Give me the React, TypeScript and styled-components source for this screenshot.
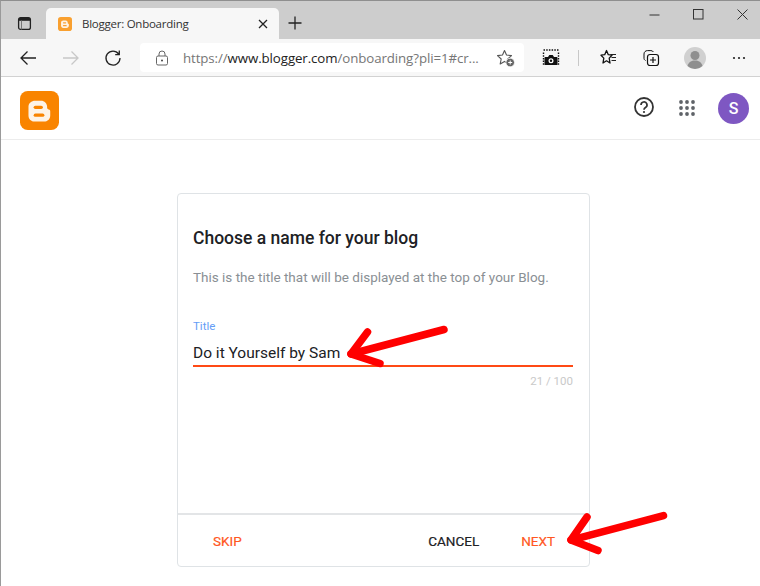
import React from "react";
import styled, { createGlobalStyle } from "styled-components";

const Global = createGlobalStyle`
  html, body { margin: 0; padding: 0; background: #fff; }
  body { font-family: Roboto, "Liberation Sans", sans-serif; width: 760px; height: 586px; overflow: hidden; }
  * { box-sizing: border-box; }
`;

const Window = styled.div`
  position: relative;
  width: 760px;
  height: 586px;
  display: flex;
  flex-direction: column;
  border-top: 1px solid #8f8f8f;
  border-left: 1px solid #9a9a9a;
  overflow: hidden;
`;

const TabStrip = styled.div`
  height: 38px;
  flex: none;
  background: #cdcdcd;
  display: flex;
  align-items: flex-end;
  padding-left: 15px;
`;

const StripIcon = styled.span`
  width: 16px;
  height: 16px;
  display: flex;
  margin-bottom: 8px;
  margin-right: 14px;
`;

const Tab = styled.div`
  width: 233px;
  height: 31px;
  background: #f7f7f7;
  border-radius: 5px 5px 0 0;
  display: flex;
  align-items: center;
  padding: 0 11px 0 12px;
  font-family: "Open Sans", "Liberation Sans", sans-serif;
  font-size: 11.5px;
  color: #333;
`;

const TabTitle = styled.span`
  flex: 1;
  margin-left: 10px;
  letter-spacing: -0.25px;
`;

const NewTab = styled.span`
  width: 14px;
  height: 14px;
  display: flex;
  margin: 0 0 9px 9px;
`;

const WindowControls = styled.div`
  margin-left: auto;
  display: flex;
  align-self: flex-start;
  gap: 33px;
  padding: 8px 12px 0 0;
`;

const Toolbar = styled.div`
  height: 38px;
  flex: none;
  background: #f7f7f7;
  border-bottom: 1px solid #d2d2d2;
  display: flex;
  align-items: center;
  padding-left: 18px;
`;

const NavIcon = styled.span<{ $gap?: number; $left?: number }>`
  display: flex;
  width: 18px;
  height: 18px;
  margin-left: ${(p) => p.$left ?? 0}px;
  margin-right: ${(p) => p.$gap ?? 0}px;
`;

const ProfileIcon = styled.svg`
  margin-right: 26px;
`;

const AddressBar = styled.div`
  width: 384px;
  height: 29px;
  background: #fff;
  border-radius: 4px;
  display: flex;
  align-items: center;
  padding: 0 9px 0 15px;
  font-family: "Open Sans", "Liberation Sans", sans-serif;
  font-size: 13.3px;
  color: #767676;
  letter-spacing: -0.1px;
  white-space: nowrap;
`;

const Url = styled.span`
  flex: 1;
  margin-left: 14px;
`;

const Host = styled.span`
  color: #222;
`;

const Separator = styled.span`
  width: 1px;
  height: 16px;
  background: #c8c8c8;
  margin: 0 20px 0 18px;
`;

const Header = styled.header`
  height: 63px;
  flex: none;
  border-bottom: 1px solid #ececec;
  background: #fff;
  display: flex;
  align-items: center;
  padding: 0 11px 0 19px;
`;

const LogoSlot = styled.span`
  display: flex;
  margin-top: 4px;
`;

const HeaderActions = styled.div`
  margin-left: auto;
  display: flex;
  align-items: center;
`;

const HelpIcon = styled.svg`
  margin: -2px 25px 0 0;
`;

const Avatar = styled.div`
  width: 31px;
  height: 31px;
  border-radius: 50%;
  background: #7e57c2;
  color: #fff;
  font-size: 16px;
  font-weight: 500;
  display: flex;
  align-items: center;
  justify-content: center;
  margin-left: 23px;
`;

const Body = styled.main`
  flex: 1;
  display: flex;
  padding: 53px 0 0 176px;
`;

const Card = styled.section`
  width: 413px;
  height: 374px;
  border: 1px solid #dfe3e6;
  border-radius: 4px;
  display: flex;
  flex-direction: column;
  background: #fff;
`;

const CardBody = styled.div`
  flex: 1;
  padding: 34px 16px 0 15px;
`;

const CardTitle = styled.h1`
  margin: 0;
  font-size: 17.5px;
  line-height: 20px;
  font-weight: 500;
  color: #202124;
`;

const CardHint = styled.p`
  margin: 19px 0 0;
  font-size: 13.5px;
  line-height: 20px;
  color: #8a8f94;
`;

const FieldLabel = styled.div`
  margin-top: 32px;
  font-size: 11.5px;
  line-height: 14px;
  color: #669df6;
`;

const FieldValue = styled.div`
  margin-top: 10px;
  font-size: 15.5px;
  line-height: 20px;
  color: #202124;
  padding-bottom: 2px;
  border-bottom: 2px solid #ff4a15;
`;

const Counter = styled.div`
  margin-top: 7px;
  font-size: 11.5px;
  line-height: 14px;
  text-align: right;
  color: #c9c9c9;
`;

const Footer = styled.footer`
  height: 53px;
  flex: none;
  border-top: 2px solid #e3e5e7;
  display: flex;
  align-items: center;
  padding: 0 34px 0 35px;
`;

const Action = styled.span<{ $dark?: boolean; $left?: number }>`
  font-size: 13.5px;
  font-weight: 400;
  -webkit-text-stroke: 0.2px currentColor;
  color: ${(p) => (p.$dark ? "#202124" : "#ff5722")};
  margin-left: ${(p) => p.$left ?? 0}px;
`;

const Spacer = styled.span`
  flex: 1;
`;

const ArrowLayer = styled.svg`
  position: absolute;
  left: -1px;
  top: -1px;
  width: 760px;
  height: 586px;
  pointer-events: none;
`;

const Stroke = { fill: "none", stroke: "#222", strokeWidth: 1.3 } as const;

const BloggerLogo = ({ size, fill = "#f98400" }: { size: number; fill?: string }) => (
  <svg width={size} height={size} viewBox="0 0 40 40">
    <rect width="40" height="40" rx="8" fill={fill} />
    <path d="M15.500 10h6c3.800 0 6 2.600 6.300 5.700v1.300c0 1.200 .6 1.800 1.700 2 .9 .2 1.500 .8 1.500 1.800V25c0 3.600-2.800 6.300-6.400 6.300H15c-3.500 0-6.300-2.700-6.300-6.300V16c0-3.400 3-6 6.800-6z" fill="#fdf3e7" />
    <rect x="14" y="15" width="9.500" height="3.500" rx="1.750" fill={fill} />
    <rect x="14" y="23" width="11" height="3.500" rx="1.750" fill={fill} />
  </svg>
);

const Arrow = ({ tail, tip, upper, lower }: Record<"tail" | "tip" | "upper" | "lower", string>) => (
  <g fill="none" stroke="#ff0000" strokeWidth="7.500" strokeLinecap="round" strokeLinejoin="round">
    <path d={`M${tail}L${tip}`} />
    <path d={`M${upper}L${tip}L${lower}`} />
  </g>
);

export default function App() {
  return (
    <>
      <Global />
      <Window>
        <TabStrip>
          <StripIcon>
            <svg width="16" height="16" viewBox="0 0 16 16">
              <rect x="2.600" y="2.600" width="11.800" height="11.800" rx="2" {...Stroke} />
              <rect x="3" y="3" width="11" height="2.800" fill="#222" />
              <path d="M5.500 5.500v9" stroke="#777" strokeWidth="1" />
            </svg>
          </StripIcon>
          <Tab>
            <BloggerLogo size={14} fill="#f9a030" />
            <TabTitle>Blogger: Onboarding</TabTitle>
            <svg width="10" height="10" viewBox="0 0 10 10">
              <path d="M1 1l8 8M9 1l-8 8" {...Stroke} />
            </svg>
          </Tab>
          <NewTab>
            <svg width="14" height="14" viewBox="0 0 14 14">
              <path d="M7 0.500v13M0.500 7h13" {...Stroke} />
            </svg>
          </NewTab>
          <WindowControls>
            <svg width="11" height="11" viewBox="0 0 11 11"><path d="M0.500 6h10" {...Stroke} strokeWidth={1} stroke="#333" /></svg>
            <svg width="11" height="11" viewBox="0 0 11 11"><rect x="0.500" y="0.500" width="9.500" height="9.500" {...Stroke} strokeWidth={1} stroke="#333" /></svg>
            <svg width="11" height="11" viewBox="0 0 11 11"><path d="M0.500 0.500l10 10M10.500 0.500l-10 10" {...Stroke} strokeWidth={1} stroke="#333" /></svg>
          </WindowControls>
        </TabStrip>
        <Toolbar>
          <NavIcon $gap={25}>
            <svg width="18" height="18" viewBox="0 0 18 18"><path d="M17 9H2M8.500 2.500L2 9l6.500 6.500" {...Stroke} /></svg>
          </NavIcon>
          <NavIcon $gap={24}>
            <svg width="18" height="18" viewBox="0 0 18 18"><path d="M1 9h15M9.500 2.500L16 9l-6.500 6.500" {...Stroke} stroke="#c8c8c8" /></svg>
          </NavIcon>
          <NavIcon $gap={18}>
            <svg width="18" height="18" viewBox="0 0 18 18"><path d="M14.700 5A7 7 0 1 0 16 9M15.300 1.500V5.600h-4.100" {...Stroke} /></svg>
          </NavIcon>
          <AddressBar>
            <svg width="14" height="16" viewBox="0 0 14 16">
              <path d="M4 6V4a3 3 0 0 1 6 0v2" fill="none" stroke="#666" />
              <rect x="1.500" y="6" width="11" height="9" rx="1.500" fill="none" stroke="#666" />
              <circle cx="7" cy="10.500" r="1" fill="#444" />
            </svg>
            <Url>https://<Host>www.blogger.com</Host>/onboarding?pli=1#cr...</Url>
            <svg width="18" height="18" viewBox="0 0 18 18">
              <path d="M7.500 1.500l2 4.500 5 .6-3.700 3.400 1 4.900-4.300-2.500-4.300 2.500 1-4.900L0.500 6.600l5-.6z" fill="none" stroke="#555" strokeWidth="1.100" strokeLinejoin="round" />
              <circle cx="13.200" cy="13.500" r="4.300" fill="#666" stroke="#fff" strokeWidth="0.800" />
              <path d="M13.200 11.500v4M11.200 13.500h4" stroke="#fff" />
            </svg>
          </AddressBar>
          <NavIcon $left={18}>
            <svg width="18" height="18" viewBox="0 0 18 18">
              <path d="M1.500 1h15M1.500 3.500v13M16.500 3.500v13" fill="none" stroke="#111" strokeWidth="1.400" strokeDasharray="1.500 1.200" />
              <path d="M3.500 8h2.500l1.300-2h3.400l1.300 2h2.500c.6 0 1 .4 1 1v7h-13V9c0-.6 .4-1 1-1z" fill="#111" />
              <circle cx="9" cy="11.800" r="2.500" fill="#fff" />
              <circle cx="9" cy="11.800" r="1.200" fill="#111" />
            </svg>
          </NavIcon>
          <Separator />
          <NavIcon $gap={25}>
            <svg width="18" height="18" viewBox="0 0 18 18">
              <path d="M7.500 1.500l1.800 4.200 3.700 .5-2.800 2.900 .8 4.900-3.500-2.200-3.500 2.200 .8-4.900L2 6.200l3.700-.5z" fill="none" stroke="#111" strokeWidth="1.300" strokeLinejoin="round" />
              <path d="M11.500 5.500h5.500M12.500 8.500h4.500M12.500 11.500h4.500" stroke="#222" />
            </svg>
          </NavIcon>
          <NavIcon $gap={24}>
            <svg width="18" height="18" viewBox="0 0 18 18">
              <path d="M3.500 11.500c-.8-.4-1.500-1.100-1.500-2.200V5c0-1.900 1.500-3.400 3.400-3.400h3.500c1.100 0 2 .5 2.500 1.400" fill="none" stroke="#111" />
              <rect x="5.500" y="5.500" width="11" height="11" rx="2.500" fill="none" stroke="#111" strokeWidth="1.200" />
              <path d="M11 8v6M8 11h6" stroke="#111" strokeWidth="1.200" />
            </svg>
          </NavIcon>
          <ProfileIcon width="22" height="22" viewBox="0 0 22 22">
            <circle cx="11" cy="11" r="11" fill="#d0d0d0" />
            <circle cx="11" cy="8.500" r="4.500" fill="#8f8f8f" />
            <path d="M3.500 19c1-4 4-5.500 7.500-5.500s6.500 1.500 7.500 5.500a11 11 0 0 1-15 0z" fill="#8f8f8f" />
          </ProfileIcon>
          <svg width="14" height="4" viewBox="0 0 14 4">
            <circle cx="2" cy="2" r="1.100" fill="#222" />
            <circle cx="7" cy="2" r="1.100" fill="#222" />
            <circle cx="12" cy="2" r="1.100" fill="#222" />
          </svg>
        </Toolbar>
        <Header>
          <LogoSlot>
            <BloggerLogo size={39} />
          </LogoSlot>
          <HeaderActions>
            <HelpIcon width="20" height="20" viewBox="0 0 20 20">
              <circle cx="10" cy="10" r="9" fill="none" stroke="#333" strokeWidth="1.800" />
              <path d="M7 8a3 3 0 1 1 4.500 2.500c-1 .6-1.500 1.200-1.500 2.200" fill="none" stroke="#333" strokeWidth="1.700" />
              <circle cx="10" cy="15" r="1.100" fill="#333" />
            </HelpIcon>
            <svg width="16" height="16" viewBox="0 0 16 16">
              {[0, 1, 2].flatMap((r) =>
                [0, 1, 2].map((c) => <circle key={`${r}${c}`} cx={2 + c * 6} cy={2 + r * 6} r="1.900" fill="#5f6368" />)
              )}
            </svg>
            <Avatar>S</Avatar>
          </HeaderActions>
        </Header>
        <Body>
          <Card>
            <CardBody>
              <CardTitle>Choose a name for your blog</CardTitle>
              <CardHint>This is the title that will be displayed at the top of your Blog.</CardHint>
              <FieldLabel>Title</FieldLabel>
              <FieldValue>Do it Yourself by Sam</FieldValue>
              <Counter>21 / 100</Counter>
            </CardBody>
            <Footer>
              <Action>SKIP</Action>
              <Spacer />
              <Action $dark>CANCEL</Action>
              <Action $left={42}>NEXT</Action>
            </Footer>
          </Card>
        </Body>
        <ArrowLayer viewBox="0 0 760 586">
          <Arrow tail="444 329.500" tip="351 354" upper="367.500 332" lower="380 363.500" />
          <Arrow tail="663.500 515.500" tip="571 540" upper="587 517" lower="598 550.500" />
        </ArrowLayer>
      </Window>
    </>
  );
}
